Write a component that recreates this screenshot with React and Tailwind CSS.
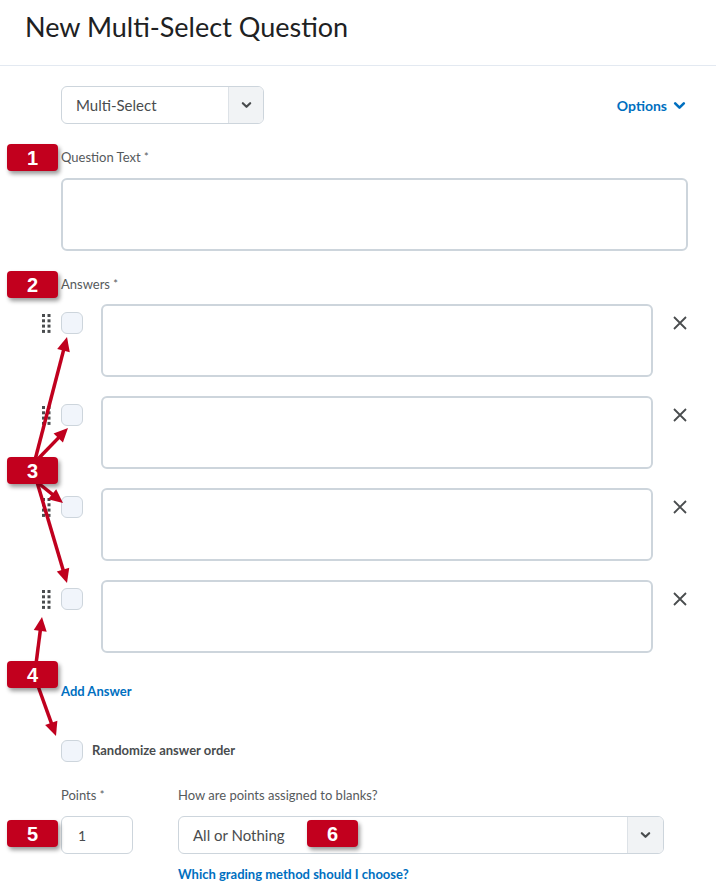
import React from 'react'

const font = { fontFamily: 'Lato, "Open Sans", sans-serif' }

const Chevron = ({ className = '' }) => (
    <svg viewBox="0 0 12 8" className={className} fill="none" stroke="currentColor" strokeWidth="2.4" strokeLinecap="round" strokeLinejoin="round">
        <path d="M2 2l4 4 4-4" />
    </svg>
)

const DragHandle = () => (
    <svg width="9" height="19" viewBox="0 0 9 19" className="text-[#494c4e]">
        {[0, 5.3, 10.6, 15.9].map(y => (
            <g key={y}>
                <rect x="0" y={y} width="3" height="3" fill="currentColor" />
                <rect x="5.5" y={y} width="3" height="3" fill="currentColor" />
            </g>
        ))}
    </svg>
)

const Checkbox = () => (
    <div className="w-[22px] h-[22px] rounded-[6px] border border-[#cdd5dc] bg-[#f1f5fb] shrink-0" />
)

const Badge = ({ n, className }) => (
    <div className={`absolute w-[51px] h-[27px] rounded-[4px] bg-[#c2001e] text-white font-bold text-[20px] flex items-center justify-center shadow-[2px_3px_4px_rgba(0,0,0,0.4)] ${className}`} style={{ fontFamily: '"Liberation Sans", Arial, sans-serif' }}>
        {n}
    </div>
)

const Arrow = ({ x1, y1, x2, y2 }) => {
    const dx = x2 - x1
    const dy = y2 - y1
    const len = Math.hypot(dx, dy)
    const ux = dx / len
    const uy = dy / len
    const hl = 14
    const hw = 6.5
    const bx = x2 - ux * hl
    const by = y2 - uy * hl
    const pts = `${x2},${y2} ${bx - uy * hw},${by + ux * hw} ${bx + uy * hw},${by - ux * hw}`
    return (
        <g>
            <line x1={x1} y1={y1} x2={bx + ux * 2} y2={by + uy * 2} stroke="#c0001e" strokeWidth="3.5" />
            <polygon points={pts} fill="#c0001e" />
        </g>
    )
}

const AnswerRow = () => (
    <div className="flex items-start -ml-[20px]">
        <div className="w-[20px] pt-[10px] pl-[1px]">
            <DragHandle />
        </div>
        <div className="pt-[8px]">
            <Checkbox />
        </div>
        <div className="ml-[18px] flex-1 h-[73px] rounded-[6px] border-2 border-[#cdd5dc] bg-white" />
        <div className="w-[35px] flex justify-end pt-[12px] pr-[1px]">
            <svg width="14" height="14" viewBox="0 0 14 14" stroke="#494c4e" strokeWidth="1.8">
                <path d="M1 1l12 12M13 1L1 13" />
            </svg>
        </div>
    </div>
)

const App = () => {
    return (
        <div className="relative w-[716px] h-[885px] bg-white overflow-hidden text-[#494c4e]" style={font}>
            <div className="h-[66px] border-b border-[#e3e9f1] pl-[25px] pt-[10px]">
                <h1 className="text-[27px] text-[#202122] leading-[33px]">New Multi-Select Question</h1>
            </div>

            <div className="pl-[61px] pr-[28px]">
                <div className="mt-[20px] flex items-center justify-between">
                    <div className="w-[203px] h-[38px] rounded-[6px] border border-[#cdd5dc] flex overflow-hidden">
                        <div className="flex-1 flex items-center pl-[14px] text-[15px] text-[#494c4e]">Multi-Select</div>
                        <div className="w-[35px] bg-[#f1f3f5] border-l border-[#dde2e7] flex items-center justify-center text-[#494c4e]">
                            <Chevron className="w-[11px] h-[8px]" />
                        </div>
                    </div>
                    <div className="flex items-center gap-[6px] text-[14px] font-bold text-[#006fbf] mr-[2px]">
                        Options
                        <Chevron className="w-[13px] h-[9px]" />
                    </div>
                </div>

                <div className="mt-[24px] text-[13px] text-[#565a5c] leading-[18px]">Question Text <span className="text-[11px] align-top">*</span></div>
                <div className="mt-[12px] h-[73px] rounded-[6px] border-2 border-[#cdd5dc]" />

                <div className="mt-[24px] text-[13px] text-[#565a5c] leading-[18px]">Answers <span className="text-[11px] align-top">*</span></div>
                <div className="mt-[11px] flex flex-col gap-[19px]">
                    <AnswerRow />
                    <AnswerRow />
                    <AnswerRow />
                    <AnswerRow />
                </div>

                <div className="mt-[29px] text-[13px] font-bold text-[#006fbf] leading-[18px]">Add Answer</div>

                <div className="mt-[40px] flex items-center gap-[9px]">
                    <Checkbox />
                    <span className="text-[13px] font-bold text-[#494c4e]">Randomize answer order</span>
                </div>

                <div className="mt-[24px] flex gap-[45px]">
                    <div className="flex flex-col">
                        <div className="text-[13px] text-[#565a5c] leading-[18px]">Points <span className="text-[11px] align-top">*</span></div>
                        <div className="mt-[12px] w-[72px] h-[38px] rounded-[6px] border border-[#cdd5dc] flex items-center pl-[16px] text-[14px] text-[#494c4e]">1</div>
                    </div>
                    <div className="flex flex-col">
                        <div className="text-[13px] text-[#565a5c] leading-[18px]">How are points assigned to blanks?</div>
                        <div className="mt-[12px] w-[486px] h-[38px] rounded-[6px] border border-[#cdd5dc] flex overflow-hidden">
                            <div className="flex-1 flex items-center pl-[14px] text-[15px] text-[#494c4e]">All or Nothing</div>
                            <div className="w-[36px] bg-[#f1f3f5] border-l border-[#dde2e7] flex items-center justify-center">
                                <Chevron className="w-[11px] h-[8px]" />
                            </div>
                        </div>
                        <div className="mt-[11px] text-[13px] font-bold text-[#006fbf] leading-[18px]">Which grading method should I choose?</div>
                    </div>
                </div>
            </div>

            <svg className="absolute inset-0 pointer-events-none" width="716" height="885">
                <Arrow x1={35} y1={460} x2={67} y2={337} />
                <Arrow x1={37} y1={460} x2={68} y2={428} />
                <Arrow x1={37} y1={482} x2={63} y2={503} />
                <Arrow x1={37} y1={482} x2={67} y2={583} />
                <Arrow x1={36} y1={664} x2={42} y2={617} />
                <Arrow x1={38} y1={686} x2={56} y2={736} />
            </svg>

            <Badge n="1" className="left-[7px] top-[144px]" />
            <Badge n="2" className="left-[7px] top-[271px]" />
            <Badge n="3" className="left-[7px] top-[457px]" />
            <Badge n="4" className="left-[7px] top-[661px]" />
            <Badge n="5" className="left-[7px] top-[820px]" />
            <Badge n="6" className="left-[307px] top-[820px]" />
        </div>
    )
}

export default App
